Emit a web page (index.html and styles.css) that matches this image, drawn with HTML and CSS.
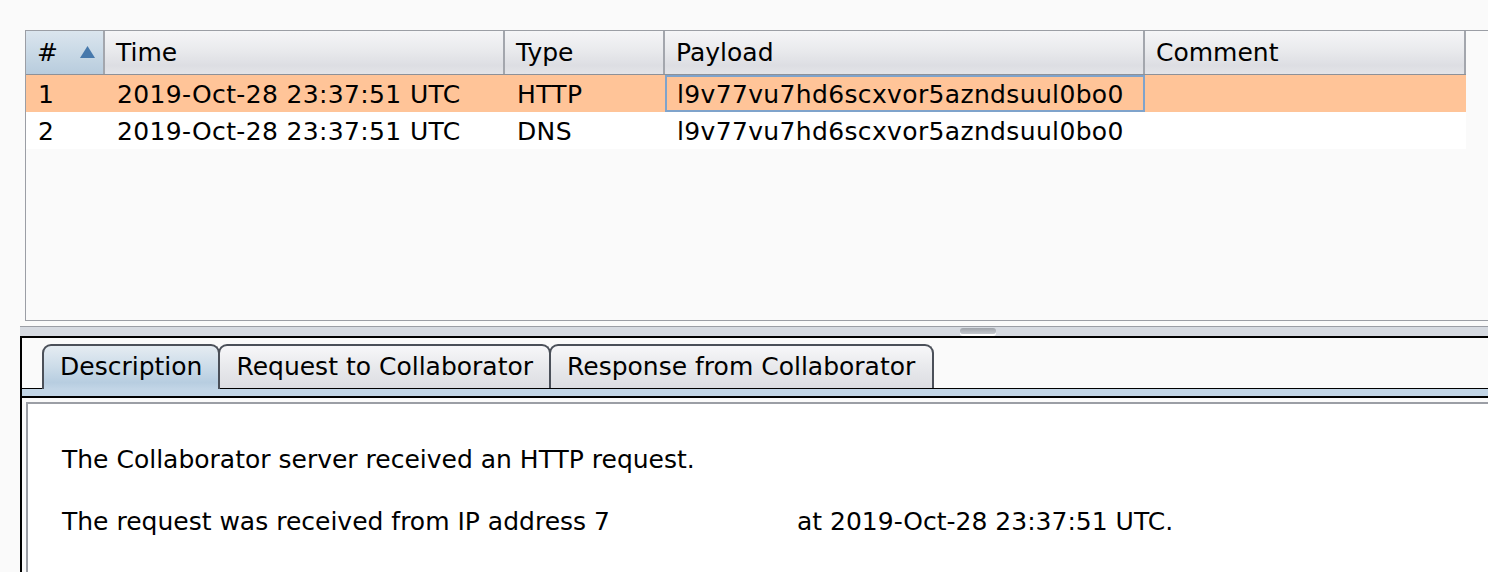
FILE: index.html
```html
<!DOCTYPE html>
<html>
<head>
<meta charset="utf-8">
<title>Collaborator interactions</title>
<link rel="stylesheet" href="styles.css">
</head>
<body>
<div class="results">
  <div class="row head">
    <div class="cell hcell sorted"><span>#</span>
      <svg class="sort" width="15" height="12" viewBox="0 0 15 12"><path d="M7.5 0 L15 12 L0 12 Z" fill="#4779ac"/></svg>
    </div>
    <div class="cell hcell">Time</div>
    <div class="cell hcell">Type</div>
    <div class="cell hcell">Payload</div>
    <div class="cell hcell last">Comment</div>
  </div>
  <div class="row data selected">
    <div class="cell">1</div>
    <div class="cell">2019-Oct-28 23:37:51 UTC</div>
    <div class="cell">HTTP</div>
    <div class="cell focus">l9v77vu7hd6scxvor5azndsuul0bo0</div>
    <div class="cell"></div>
  </div>
  <div class="row data">
    <div class="cell">2</div>
    <div class="cell">2019-Oct-28 23:37:51 UTC</div>
    <div class="cell">DNS</div>
    <div class="cell">l9v77vu7hd6scxvor5azndsuul0bo0</div>
    <div class="cell"></div>
  </div>
</div>
<div class="splitter"><div class="grip"></div></div>
<div class="detail">
  <div class="tabs">
    <div class="tab active">Description</div>
    <div class="tab">Request to Collaborator</div>
    <div class="tab wide">Response from Collaborator</div>
  </div>
  <div class="strip"></div>
  <div class="content">
    <p class="line">The Collaborator server received an HTTP request.</p>
    <p class="line">The request was received from IP address 7<span class="redacted"></span>at 2019-Oct-28 23:37:51 UTC.</p>
  </div>
</div>
</body>
</html>
```

FILE: styles.css
```css
html, body {
  margin: 0;
  padding: 0;
}
body {
  background: #fafafa;
  font-family: "DejaVu Sans", "Liberation Sans", sans-serif;
  font-size: 25px;
  color: #000;
  height: 572px;
  overflow: hidden;
}
.results {
  margin: 30px 0 0 25px;
  height: 291px;
  box-sizing: border-box;
  border-top: 1px solid #9b9ea5;
  border-bottom: 1px solid #9b9ea5;
  border-left: 1px solid #9b9ea5;
}
.row {
  display: grid;
  grid-template-columns: 79px 400px 160px 480px 321px;
  width: 1440px;
}
.head {
  height: 44px;
  box-sizing: border-box;
  border-bottom: 1px solid #8d9199;
}
.hcell {
  height: 43px;
  line-height: 43px;
  padding-left: 11px;
  box-sizing: border-box;
  background: linear-gradient(to bottom, #f5f5f7 0%, #e9eaed 45%, #dddee3 80%, #e3e4e8 100%);
  border-right: 2px solid #a3a6ad;
  white-space: nowrap;
}
.hcell.sorted {
  display: flex;
  justify-content: space-between;
  align-items: center;
  padding-right: 8px;
  background: linear-gradient(to bottom, #dbe5ee 0%, #c9d9e6 50%, #b8ccdd 100%);
}
.sort {
  display: block;
  margin-top: -2px;
}
.data {
  height: 37px;
  background: #fff;
}
.data .cell {
  height: 37px;
  box-sizing: border-box;
  padding: 3px 0 0 12px;
  line-height: 34px;
  letter-spacing: 0.35px;
  white-space: nowrap;
  overflow: hidden;
}
.data.selected {
  background: #ffc498;
}
.data .cell.focus {
  box-shadow: inset 0 0 0 2px #7fa3cb;
}
.splitter {
  position: relative;
  margin: 5px 0 0 20px;
  height: 10px;
  box-sizing: border-box;
  border-top: 1px solid #9b9ea5;
  background: #d6dae1;
}
.grip {
  position: absolute;
  left: 940px;
  top: 1px;
  width: 36px;
  height: 6px;
  border-radius: 4px;
  background: linear-gradient(to bottom, #9fa3aa, #c4c8ce);
  box-shadow: 0 2px 0 #ffffff;
}
.detail {
  margin-left: 20px;
  border-left: 2px solid #000;
  border-top: 2px solid #000;
  height: 234px;
  background: #fafafa;
  overflow: hidden;
}
.tabs {
  display: flex;
  padding: 6px 0 0 20px;
  border-bottom: 1px solid #000;
}
.tab {
  height: 44px;
  box-sizing: border-box;
  line-height: 42px;
  padding: 0 16px;
  border: 2px solid #4b5059;
  border-bottom: none;
  border-radius: 9px 9px 0 0;
  margin-left: -2px;
  background: linear-gradient(to bottom, #f7f7f9 0%, #e8e9ec 50%, #dcdde2 100%);
  white-space: nowrap;
}
.tab:first-child {
  margin-left: 0;
}
.tab.wide {
  padding: 0 17px 0 16px;
}
.tab.active {
  position: relative;
  z-index: 1;
  margin-bottom: -1px;
  height: 45px;
  background: linear-gradient(to bottom, #e5ecf2 0%, #cbdbe8 50%, #b7cde0 85%, #c2d5e6 100%);
}
.strip {
  height: 7px;
  background: #c2d5e6;
  border-bottom: 2px solid #000;
}
.content {
  margin: 4px 0 0 4px;
  height: 170px;
  box-sizing: border-box;
  border-top: 2px solid #9b9ea5;
  border-left: 2px solid #9b9ea5;
  background: #fff;
  padding: 41px 0 0 34px;
}
.line {
  margin: 0 0 32px 0;
  line-height: 30px;
  white-space: nowrap;
}
.redacted {
  display: inline-block;
  width: 187px;
}
```
